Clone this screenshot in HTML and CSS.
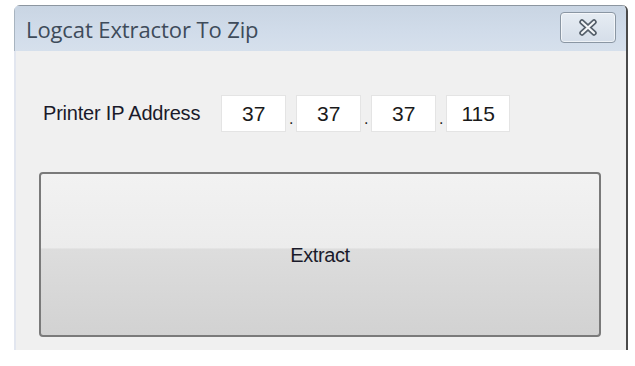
FILE: index.html
```html
<!DOCTYPE html>
<html>
<head>
<link rel="stylesheet" href="styles.css">
</head>
<body>
<div class="window">
<div class="title-bar">
<span class="title">Logcat Extractor To Zip</span>
<div class="close-btn">
<svg width="24" height="17" viewBox="0 0 24 17">
<path d="M6 3 L18 14 M18 3 L6 14" stroke="#56606b" stroke-width="5.5" stroke-linecap="round"/>
<path d="M6 3 L18 14 M18 3 L6 14" stroke="#f4f6f8" stroke-width="2.2" stroke-linecap="round"/>
</svg>
</div>
</div>
<div class="window-body">
<div class="ip-row">
<span class="ip-label">Printer IP Address</span>
<div class="ip-fields">
<div class="ip-box">37</div>
<span class="ip-dot">.</span>
<div class="ip-box">37</div>
<span class="ip-dot">.</span>
<div class="ip-box">37</div>
<span class="ip-dot">.</span>
<div class="ip-box">115</div>
</div>
</div>
<div class="extract-btn">Extract</div>
</div>
</div>
</body>
</html>
```

FILE: styles.css
```css
body {
margin: 0;
background: white;
font-family: "Liberation Sans", Arial, sans-serif;
}

.window {
margin: 5px 0 0 14px;
width: 614px;
height: 345px;
display: flex;
flex-direction: column;
border-right: 2px solid #4a4a4a;
border-radius: 6px 6px 0 0;
box-sizing: border-box;
overflow: hidden;
}

.title-bar {
height: 45px;
background: linear-gradient(to bottom, #c9d5e3, #d1dcea 60%, #d6e0ec);
display: flex;
align-items: center;
justify-content: space-between;
padding: 0 10px 0 11px;
border-top: 1px solid #8c96a0;
border-left: 1px solid #a8b4c0;
}

.title {
font-family: "Open Sans", sans-serif;
font-size: 22px;
color: #3e4b5a;
letter-spacing: -0.1px;
margin-top: 1px;
}

.close-btn {
width: 56px;
height: 31px;
margin-top: -3px;
border: 1px solid #8a96a3;
border-radius: 4px;
box-sizing: border-box;
background: linear-gradient(to bottom, #e6ecf3, #d5dee9);
box-shadow: inset 0 0 0 1px rgba(255,255,255,0.6);
display: flex;
align-items: center;
justify-content: center;
}

.window-body {
flex: 1;
background: #f0f0f0;
border-left: 2px solid #e2e6ef;
padding: 0 25px 0 23px;
}

.ip-row {
display: flex;
align-items: center;
margin-top: 44px;
gap: 21px;
}

.ip-label {
font-size: 20px;
color: #1a1a2a;
letter-spacing: -0.2px;
margin-left: 4px;
}

.ip-fields {
display: flex;
align-items: center;
gap: 2px;
}

.ip-box {
width: 65px;
height: 37px;
background: white;
border: 1px solid #e4e4e4;
box-sizing: border-box;
display: flex;
align-items: center;
justify-content: center;
font-size: 21px;
color: #1a1a1a;
}

.ip-box:last-child {
width: 64px;
}

.ip-dot {
width: 6px;
font-size: 16px;
align-self: flex-end;
margin-bottom: 4px;
text-align: center;
color: #222;
}

.extract-btn {
margin-top: 40px;
height: 165px;
border: 2px solid #7a7a7a;
border-radius: 4px;
box-sizing: border-box;
background: linear-gradient(to bottom, #f2f2f2 0%, #ececec 46%, #dddddd 46.5%, #d2d2d2 100%);
display: flex;
align-items: center;
justify-content: center;
font-size: 20px;
color: #1a1a2a;
letter-spacing: -0.4px;
padding-top: 2px;
}
```
